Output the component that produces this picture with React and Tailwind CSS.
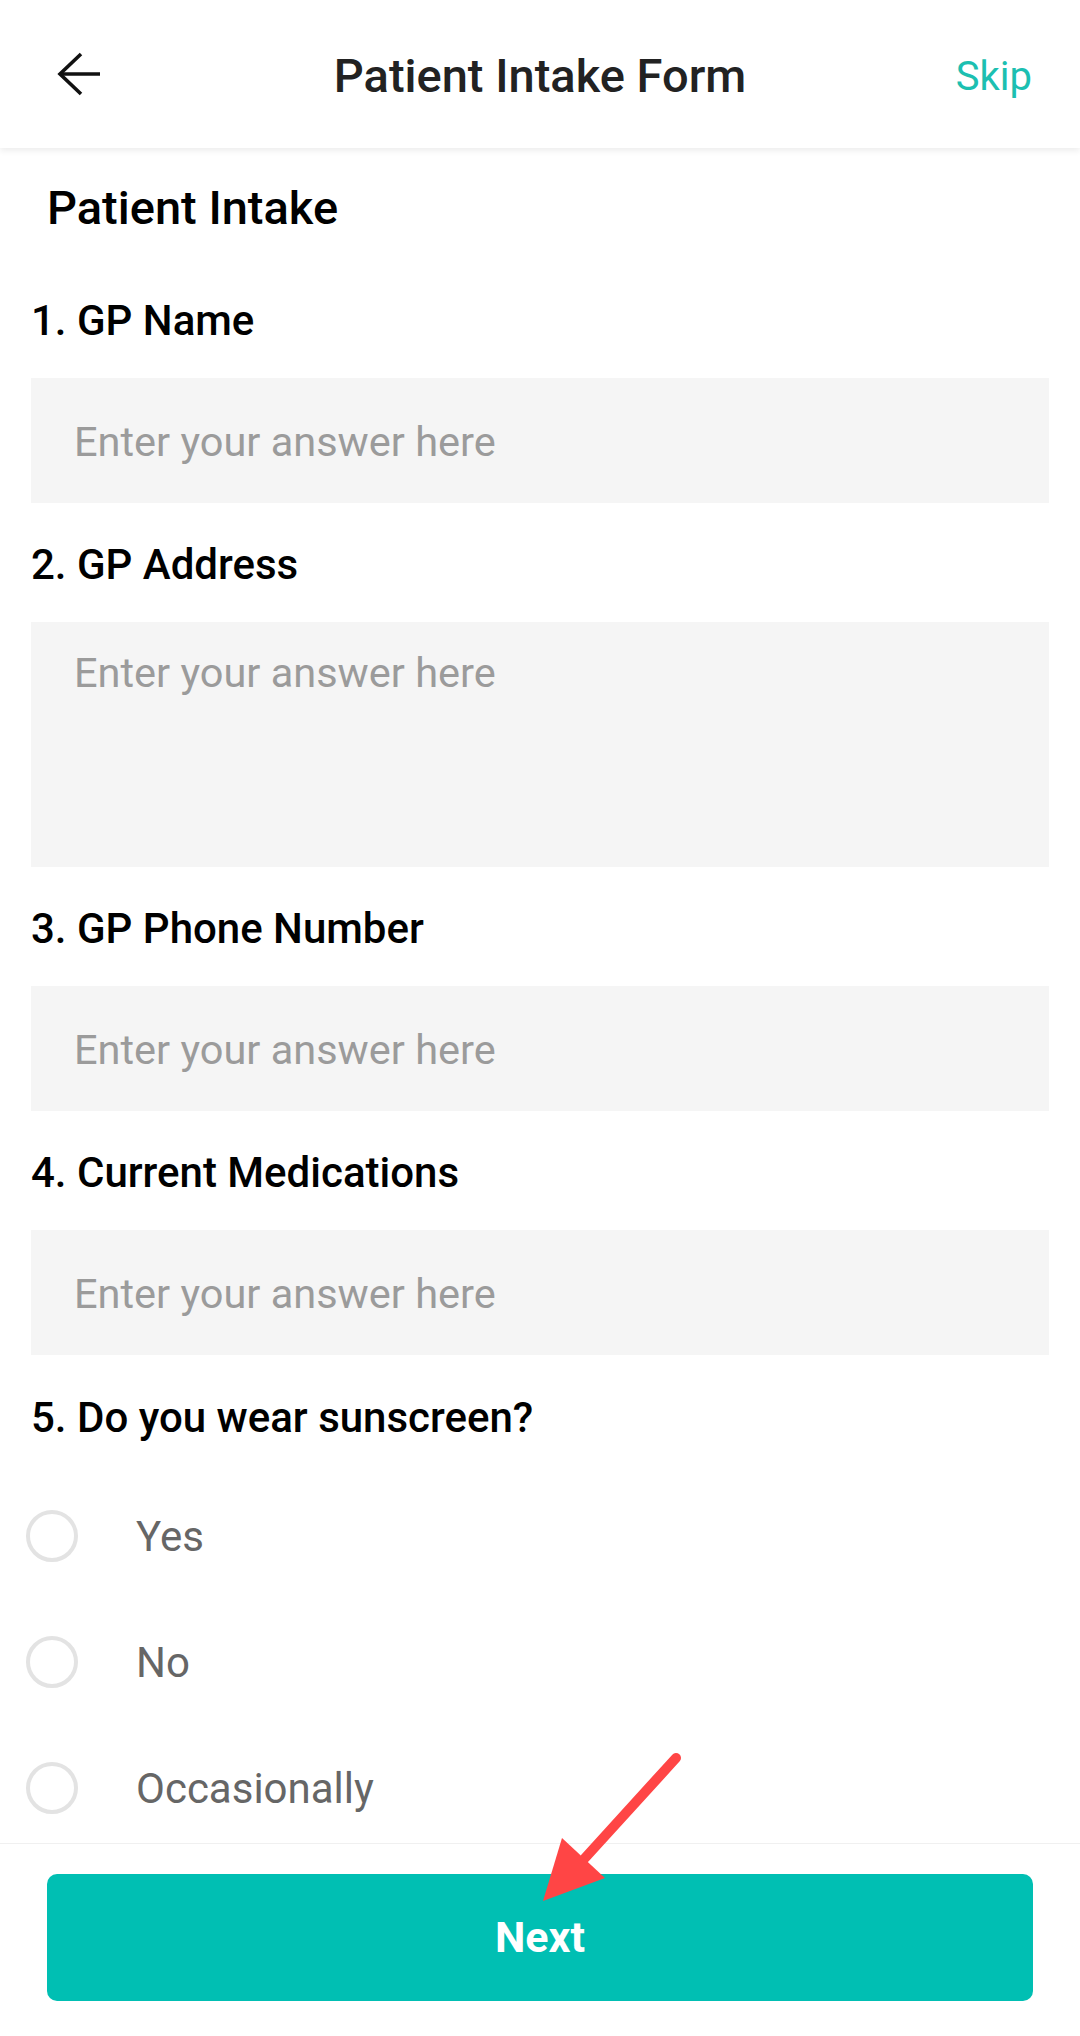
import React from "react";

const font = { fontFamily: "Roboto, 'Noto Sans', Arial, sans-serif" };

function BackArrow() {
  return (
    <svg width="44" height="44" viewBox="0 0 44 44" fill="none">
      <path d="M24 2 L3 22 L24 42" stroke="#111" strokeWidth="3.6" strokeLinejoin="miter" />
      <path d="M3 22 H43" stroke="#111" strokeWidth="3.6" />
    </svg>
  );
}

function Label({ children, className = "" }) {
  return (
    <div className={"h-[56px] leading-[56px] text-[42px] font-medium text-black " + className}>
      {children}
    </div>
  );
}

function TextField({ height = "h-[125px]" }) {
  return (
    <input
      type="text"
      placeholder="Enter your answer here"
      className={"mt-[29px] w-full bg-[#f5f5f5] px-[43px] pt-[1px] text-[41.5px] text-[#333] outline-none placeholder:text-[#9b9b9b] " + height}
    />
  );
}

function Radio({ label }) {
  return (
    <label className="flex h-[126px] items-center">
      <span className="ml-[26px] h-[52px] w-[52px] rounded-full border-[4px] border-[#e3e3e3] bg-white" />
      <span className="ml-[58px] text-[42px] text-[#666]">{label}</span>
    </label>
  );
}

export default function App() {
  return (
    <div style={font} className="relative flex h-[2036px] w-[1080px] flex-col overflow-hidden bg-white">
      {/* top bar */}
      <header className="relative z-10 flex h-[148px] shrink-0 items-center justify-between bg-white pl-[57px] pr-[48px] shadow-[0_3px_6px_rgba(0,0,0,0.07)]">
        <BackArrow />
        <h1 className="pointer-events-none absolute left-0 right-0 mt-[5px] text-center text-[47px] font-medium text-[#222]">
          Patient Intake Form
        </h1>
        <button className="mt-[5px] text-[40px] text-[#1cbfb1]">Skip</button>
      </header>

      <main className="flex-1 overflow-hidden px-[31px]">
        <h2 className="mt-[30px] ml-[16px] h-[60px] leading-[60px] text-[47px] font-medium text-black">
          Patient Intake
        </h2>

        <Label className="mt-[55px]">1. GP Name</Label>
        <TextField />

        <Label className="mt-[34px]">2. GP Address</Label>
        <textarea
          placeholder="Enter your answer here"
          className="mt-[29px] block h-[245px] w-full resize-none bg-[#f5f5f5] px-[43px] pt-[27px] text-[41.5px] leading-[48px] text-[#333] outline-none placeholder:text-[#9b9b9b]"
        />

        <Label className="mt-[34px]">3. GP Phone Number</Label>
        <TextField />

        <Label className="mt-[34px]">4. Current Medications</Label>
        <TextField />

        <Label className="mt-[35px]">5. Do you wear sunscreen?</Label>
        <div className="-ml-[31px] mt-[27px] flex flex-col">
          <Radio label="Yes" />
          <Radio label="No" />
          <Radio label="Occasionally" />
        </div>
      </main>

      <footer className="shrink-0 border-t border-[#f0f0f0] bg-white px-[47px] pt-[30px] pb-[35px]">
        <button className="h-[127px] w-full rounded-[10px] bg-[#00bfb3] text-[43px] font-bold text-white">
          Next
        </button>
      </footer>

      {/* red annotation arrow */}
      <svg className="pointer-events-none absolute left-[520px] top-[1730px]" width="180" height="190" viewBox="520 1730 180 190">
        <line x1="676" y1="1758" x2="585" y2="1858" stroke="#ff4545" strokeWidth="10" strokeLinecap="round" />
        <polygon points="543,1901 562,1838 605,1878" fill="#ff4545" />
      </svg>
    </div>
  );
}
